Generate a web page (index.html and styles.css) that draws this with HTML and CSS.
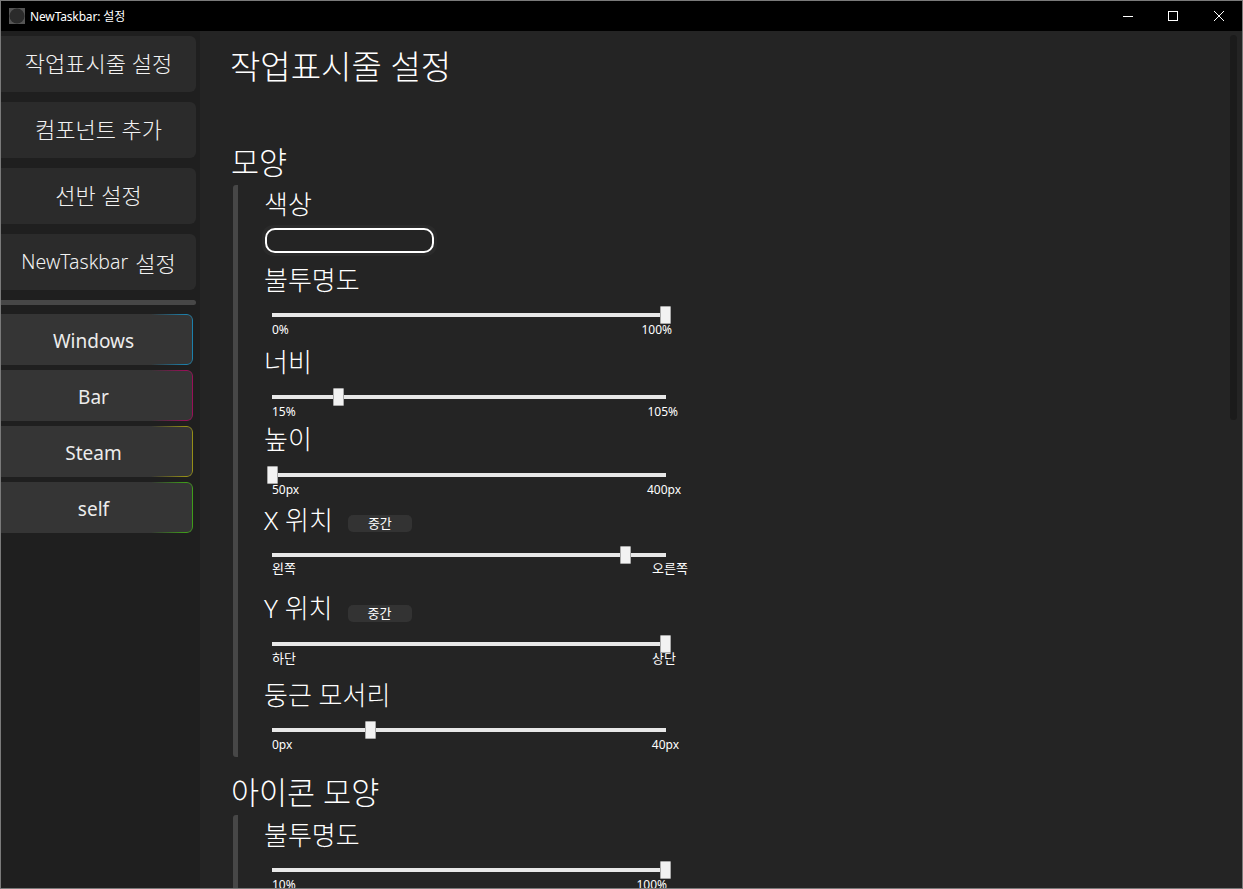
FILE: index.html
```html
<!DOCTYPE html>
<html lang="ko">
<head>
<meta charset="utf-8">
<title>NewTaskbar: 설정</title>
<link rel="stylesheet" href="styles.css">
</head>
<body>
<div class="window">
  <header class="titlebar">
    <svg class="app-icon" width="16" height="16" viewBox="0 0 16 16"><rect width="16" height="16" fill="#555"/><circle cx="8" cy="8" r="7.5" fill="#2b2b2b"/></svg>
    <span class="app-title">NewTaskbar: 설정</span>
    <div class="caption">
      <button class="cap-btn cap-min"><svg width="10" height="10" viewBox="0 0 10 10"><path d="M0 5.5H10" stroke="#fff" fill="none"/></svg></button>
      <button class="cap-btn"><svg width="10" height="10" viewBox="0 0 10 10"><rect x=".5" y=".5" width="9" height="9" stroke="#fff" fill="none"/></svg></button>
      <button class="cap-btn"><svg width="10" height="10" viewBox="0 0 10 10"><path d="M0 0L10 10M10 0L0 10" stroke="#fff" fill="none"/></svg></button>
    </div>
  </header>
  <div class="body">
    <nav class="sidebar">
      <a class="nav-btn">작업표시줄 설정</a>
      <a class="nav-btn">컴포넌트 추가</a>
      <a class="nav-btn">선반 설정</a>
      <a class="nav-btn nav-mixed"><span class="latin">NewTaskbar</span> 설정</a>
      <div class="nav-sep"></div>
      <div class="bars">
        <a class="bar-btn bar-blue">Windows</a>
        <a class="bar-btn bar-pink">Bar</a>
        <a class="bar-btn bar-yellow">Steam</a>
        <a class="bar-btn bar-green">self</a>
      </div>
    </nav>
    <main class="content">
      <h1 class="page-title">작업표시줄 설정</h1>
      <h2 class="section-title first">모양</h2>
      <section class="group">
        <div class="row row-color">
          <div class="label">색상</div>
          <div class="swatch-wrap"><div class="swatch"></div></div>
        </div>
        <div class="row row-a">
          <div class="label">불투명도</div>
          <div class="slider"><span class="thumb" style="left:99.75%"></span></div>
          <div class="ticks"><span>0%</span><span class="end-6">100%</span></div>
        </div>
        <div class="row row-b">
          <div class="label">너비</div>
          <div class="slider"><span class="thumb" style="left:16.75%"></span></div>
          <div class="ticks"><span>15%</span><span class="end-12">105%</span></div>
        </div>
        <div class="row row-c">
          <div class="label">높이</div>
          <div class="slider"><span class="thumb" style="left:0%"></span></div>
          <div class="ticks"><span>50px</span><span class="end-15">400px</span></div>
        </div>
        <div class="row row-d">
          <div class="label-line"><span class="label">X 위치</span><span class="chip">중간</span></div>
          <div class="slider"><span class="thumb" style="left:89.6%"></span></div>
          <div class="ticks ticks-ko"><span>왼쪽</span><span class="end-22">오른쪽</span></div>
        </div>
        <div class="row row-e">
          <div class="label-line"><span class="label">Y 위치</span><span class="chip">중간</span></div>
          <div class="slider"><span class="thumb" style="left:99.75%"></span></div>
          <div class="ticks ticks-ko"><span>하단</span><span class="end-10">상단</span></div>
        </div>
        <div class="row row-f">
          <div class="label">둥근 모서리</div>
          <div class="slider"><span class="thumb" style="left:24.9%"></span></div>
          <div class="ticks"><span>0px</span><span class="end-13">40px</span></div>
        </div>
      </section>
      <h2 class="section-title second">아이콘 모양</h2>
      <section class="group group-second">
        <div class="row row-a">
          <div class="label">불투명도</div>
          <div class="slider"><span class="thumb" style="left:99.75%"></span></div>
          <div class="ticks"><span>10%</span><span class="end-1">100%</span></div>
        </div>
      </section>
    </main>
    <div class="scroll-thumb"></div>
  </div>
</div>
</body>
</html>
```
FILE: styles.css
```css
* { box-sizing: border-box; }
html, body { margin: 0; height: 100%; overflow: hidden; }
body {
  background: #000;
  color: #fff;
  font-family: "Noto Sans", "Noto Sans CJK KR", sans-serif;
}
.window {
  height: 889px;
  display: flex;
  flex-direction: column;
  border: 1px solid #7a7a7a;
  overflow: hidden;
}
.titlebar {
  flex: 0 0 30px;
  background: #000;
  display: flex;
  align-items: center;
  padding-left: 8px;
}
.app-icon { margin-right: 5px; }
.app-title { font-size: 12px; letter-spacing: -0.15px; }
.caption { margin-left: auto; display: flex; }
.cap-btn {
  width: 46px;
  height: 30px;
  background: none;
  border: 0;
  padding: 0;
  display: flex;
  align-items: center;
  justify-content: center;
}
.cap-min { width: 44px; }
.body { flex: 1; display: flex; position: relative; min-height: 0; background: #242424; }
.sidebar {
  flex: 0 0 199px;
  background: #1f1f1f;
  padding: 5px 4px 0 0;
  display: flex;
  flex-direction: column;
  gap: 10px;
}
.nav-btn {
  height: 56px;
  padding-bottom: 5px;
  background: #2b2b2b;
  border-radius: 0 6px 6px 0;
  display: flex;
  align-items: center;
  justify-content: center;
  gap: 7px;
  font-size: 22px;
  font-weight: 300;
  color: #f2f2f2;
}
.nav-mixed { padding-bottom: 1px; }
.latin { font-size: 19.5px; }
.nav-sep { height: 5px; background: #474747; border-radius: 0 3px 3px 0; margin-bottom: -1px; }
.bars { display: flex; flex-direction: column; gap: 5px; margin-right: 3px; }
.bar-btn {
  position: relative;
  height: 51px;
  padding: 2px 7px 0 0;
  background: #353535;
  border-radius: 0 6px 6px 0;
  display: flex;
  align-items: center;
  justify-content: center;
  font-size: 19px;
  color: #ececec;
}
.bar-btn::after {
  content: "";
  position: absolute;
  inset: 0;
  border: 1.5px solid var(--edge);
  border-radius: 0 6px 6px 0;
  -webkit-mask-image: linear-gradient(to right, transparent 78%, #000 96%);
  mask-image: linear-gradient(to right, transparent 78%, #000 96%);
}
.bar-blue { --edge: #1c80ab; }
.bar-pink { --edge: #981058; }
.bar-yellow { --edge: #948e17; }
.bar-green { --edge: #3f9c1a; }
.content { flex: 1; padding: 0 0 0 30px; min-width: 0; }
.page-title {
  margin: 14px 0 0;
  height: 44px;
  line-height: 44px;
  font-size: 33px;
  font-weight: 300;
}
.section-title {
  margin: 0 0 0 1px;
  height: 38px;
  line-height: 38px;
  font-size: 30.5px;
  font-weight: 300;
}
.section-title.first { margin-top: 54px; }
.section-title.second { margin-top: 16px; margin-bottom: 2px; }
.group {
  margin: 4px 0 0 3px;
  padding: 2px 0 0 26px;
  position: relative;
  border-left: 5px solid #474747;
  border-radius: 3px;
}
.group-second { padding-top: 3px; }
.row { display: flex; flex-direction: column; }
.label { font-size: 26px; font-weight: 300; line-height: 34px; height: 34px; }
.label-line { display: flex; align-items: center; height: 34px; }
.chip {
  width: 64px;
  height: 17px;
  margin: 6px 0 0 15px;
  background: #333;
  border-radius: 5px;
  font-size: 13px;
  line-height: 17px;
  text-align: center;
}
.row-d .label-line { margin-top: -1px; margin-bottom: 1px; }
.row-e .label-line { margin-top: -1px; margin-bottom: 1px; }
.row-e .chip { margin-top: 10px; }
.swatch-wrap { margin-top: 4px; width: 175px; height: 31px; padding: 3px; margin-left: -2px; background: #2a2a2a; border-radius: 11px; }
.swatch { width: 169px; height: 25px; border: 2px solid #fff; border-radius: 10px; background: #242424; }
.slider {
  position: relative;
  width: 394px;
  height: 4px;
  margin: 16px 0 0 8px;
  background: #e8e8e8;
}
.row-c .slider { margin-top: 17px; }
.row-d .slider { margin-top: 15px; }
.thumb {
  position: absolute;
  top: -7px;
  width: 11px;
  height: 18px;
  margin-left: -5px;
  background: #f2f2f2;
  border: 1px solid #a8a8a8;
  border-radius: 1px;
}
.ticks {
  display: flex;
  justify-content: space-between;
  width: 394px;
  margin-left: 8px;
  margin-top: 4px;
  font-size: 12px;
  line-height: 18px;
  color: #fff;
}
.ticks-ko { font-size: 13px; margin-top: 3px; }
.row-d .ticks-ko { margin-top: 2px; }
.end-1 { margin-right: -1px; }
.end-6 { margin-right: -6px; }
.end-10 { margin-right: -10px; }
.end-12 { margin-right: -12px; }
.end-13 { margin-right: -13px; }
.end-15 { margin-right: -15px; }
.end-22 { margin-right: -22px; }
.row-color { height: 76px; }
.row-a { height: 82px; }
.row-b { height: 77px; }
.row-c { height: 82px; }
.row-d { height: 88px; }
.row-e { height: 86px; }
.row-f { height: 79px; }
.scroll-thumb {
  position: absolute;
  top: 4px;
  right: 5px;
  width: 7px;
  height: 385px;
  background: #1b1b1b;
  border-radius: 4px;
}
```
